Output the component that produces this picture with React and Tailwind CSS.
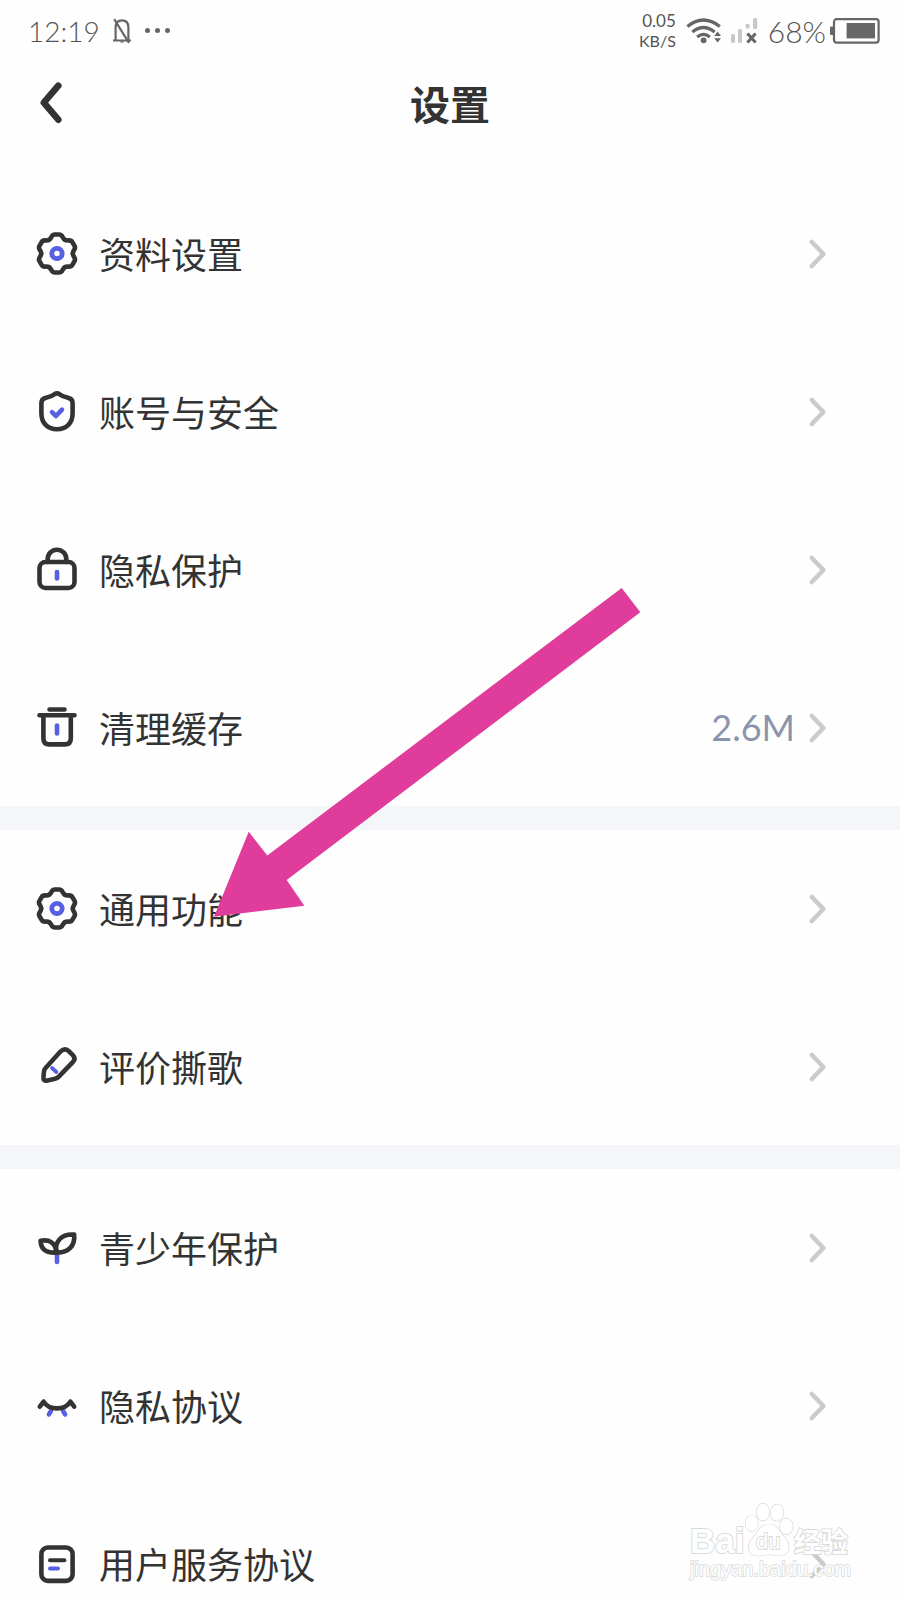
import React from "react";

const INK = "#333333";
const BLUE = "#575fe3";

function Icon({ children }) {
  return (
    <svg
      viewBox="0 0 48 48"
      className="size-12 shrink-0"
      fill="none"
      stroke={INK}
      strokeWidth="4.6"
      strokeLinecap="round"
      strokeLinejoin="round"
      aria-hidden="true"
    >
      {children}
    </svg>
  );
}

function GearIcon() {
  return (
    <Icon>
      {[0, 60, 120, 180, 240, 300].map((angle) => (
        <path
          key={angle}
          transform={`translate(24 23.5) rotate(${angle})`}
          d="M-7.9-13.7C-4.9-15.4-6-19-2.2-19L2.2-19C6-19 4.9-15.4 7.9-13.7"
        />
      ))}
      <circle cx="24" cy="23.5" r="5.2" stroke={BLUE} strokeWidth="4.8" />
    </Icon>
  );
}

function ShieldIcon() {
  return (
    <Icon>
      <path d="M21.5 6.2Q24 4.4 26.5 6.2Q29.5 8.6 35 9.8Q39.6 10.8 39.6 15V25.5C39.6 35.5 33 41.2 24 41.2S8.4 35.5 8.4 25.5V15Q8.4 10.8 13 9.8Q18.5 8.6 21.5 6.2Z" />
      <path d="M19 24.2L23 28L29 21.6" stroke={BLUE} />
    </Icon>
  );
}

function LockIcon() {
  return (
    <Icon>
      <rect x="6.5" y="16" width="35" height="26" rx="6" />
      <path d="M14.7 16V13a9.3 9.3 0 0 1 18.6 0V16" />
      <path d="M24 26V32.5" stroke={BLUE} />
    </Icon>
  );
}

function TrashIcon() {
  return (
    <Icon>
      <path d="M16.5 5.5H31.5M6.5 11.2H41.5" />
      <path d="M10.4 11.2V34.5Q10.4 40.4 16.4 40.4H31.8Q37.8 40.4 37.8 34.5V11.2" />
      <path d="M24 21.5V29.5" stroke={BLUE} />
    </Icon>
  );
}

function PencilIcon() {
  return (
    <Icon>
      <path d="M10.4 34.5L11 28.5Q11.2 26.5 12.6 25L27 9Q31.2 4.2 35.6 8L39.6 11.8Q43.2 15.6 39.8 19.2L25.8 33.6Q24.2 35.2 22 35.8L14.5 37.4Q9.9 38.4 10.4 34.5Z" />
      <path d="M19 25L23.4 29" stroke={BLUE} strokeWidth="3.8" />
    </Icon>
  );
}

function SproutIcon() {
  return (
    <Icon>
      <path d="M24 31V38" stroke={BLUE} />
      <path d="M23.5 28.6C13 29.2 8 25.5 7.6 16.8C16.5 15.2 22.5 18.5 23.5 28.6Z" />
      <path d="M23.8 28.6C20.8 18 28.5 9.6 41.2 10.6C42.2 22 35.5 28.8 23.8 28.6Z" />
    </Icon>
  );
}

function LashesIcon() {
  return (
    <Icon>
      <path d="M18 28.8L15.9 32.4M30 28.8L32.1 32.4" stroke={BLUE} />
      <path d="M10.6 19.6C16 28.6 32 28.6 37.4 19.6M6.8 24.6L10.6 19.6M41.2 24.6L37.4 19.6" />
    </Icon>
  );
}

function DocumentIcon() {
  return (
    <Icon>
      <rect x="8.4" y="7.5" width="31.2" height="33.4" rx="6.5" />
      <path d="M17 20.2H31.4" strokeWidth="4" />
      <path d="M17 28.5H25" stroke={BLUE} strokeWidth="4" />
    </Icon>
  );
}

const SECTIONS = [
  [
    { label: "资料设置", icon: GearIcon },
    { label: "账号与安全", icon: ShieldIcon },
    { label: "隐私保护", icon: LockIcon },
    { label: "清理缓存", icon: TrashIcon, value: "2.6M" },
  ],
  [
    { label: "通用功能", icon: GearIcon },
    { label: "评价撕歌", icon: PencilIcon },
  ],
  [
    { label: "青少年保护", icon: SproutIcon },
    { label: "隐私协议", icon: LashesIcon },
    { label: "用户服务协议", icon: DocumentIcon },
  ],
];

function StatusBar() {
  return (
    <div className="flex h-[62px] items-center justify-between pr-5 pl-7 font-['Lato','Noto_Sans',sans-serif] text-[28px] leading-8 text-[#555]">
      <div className="flex items-center">
        <span className="font-light">12:19</span>
        <svg viewBox="0 0 20 26" className="ml-3 h-[26px] w-5" fill="none" stroke="#666" strokeWidth="2.2" aria-hidden="true">
          <path d="M1 22.5H19M3.6 22V9.5Q3.6 2.4 10 2.4T16.4 9.5V22" />
          <path d="M2.2 1.2L17 25" />
          <path d="M7.6 23.4a2.6 2 0 0 0 4.8 0z" fill="#666" stroke="none" />
        </svg>
        <svg viewBox="0 0 28 6" className="ml-3 h-1.5 w-7" fill="#666" aria-hidden="true">
          <circle cx="3.5" cy="2.6" r="2.5" />
          <circle cx="13.5" cy="2.6" r="2.5" />
          <circle cx="23.5" cy="2.6" r="2.5" />
        </svg>
      </div>
      <div className="flex items-center">
        <div className="text-right leading-5">
          <div className="text-[17px]">0.05</div>
          <div className="text-[16px]">KB/S</div>
        </div>
        <svg viewBox="0 0 36 26" className="ml-2.5 h-[26px] w-9" fill="none" stroke="#666" strokeWidth="3.2" aria-hidden="true">
          <path d="M1.4 8.4Q17.5-4.4 33.8 8.4" />
          <path d="M6.4 14Q17.5 5 28.6 14" />
          <path d="M11.2 19Q17.5 13.6 23.8 19" />
          <circle cx="17.6" cy="22.3" r="2.9" fill="#666" stroke="none" />
          <path d="M31.6 13.6L35 18H28.2ZM31.6 24.6L35 20.2H28.2Z" fill="#666" stroke="none" />
        </svg>
        <svg viewBox="0 0 28 26" className="ml-2 h-[26px] w-7" aria-hidden="true">
          <g fill="#c8c8c8">
            <rect x="1" y="16" width="4" height="9" rx="1.5" />
            <rect x="8" y="11" width="4" height="14" rx="1.5" />
            <rect x="15.6" y="6" width="4" height="4.4" rx="1" />
            <rect x="23" y="0" width="4.2" height="11" rx="1.5" />
          </g>
          <path d="M17.4 15.6L25.6 24.6M25.6 15.6L17.4 24.6" stroke="#666" strokeWidth="3" />
        </svg>
        <span className="ml-2.5 text-[30px] font-light">68%</span>
        <svg viewBox="0 0 50 26" className="ml-1 h-[26px] w-[50px]" aria-hidden="true">
          <rect x="4" y="1.2" width="44.6" height="23.4" rx="2.5" fill="none" stroke="#666" strokeWidth="2.2" />
          <rect x="0" y="8.6" width="4" height="8.4" rx="1" fill="#666" />
          <rect x="16.6" y="5" width="28.4" height="15.4" fill="#666" />
        </svg>
      </div>
    </div>
  );
}

function Row({ label, icon: Glyph, value }) {
  return (
    <li>
      <a href="#" className="flex h-[157px] items-center pr-[69px] pl-[33px]">
        <Glyph />
        <span className="ml-[18px] grow pb-0.5 text-[36px] leading-[48px] text-[#333]">{label}</span>
        {value && (
          <span className="mr-3 pb-0.5 font-['Lato','Noto_Sans',sans-serif] text-[36px] leading-[48px] text-[#8a95ad]">{value}</span>
        )}
        <svg viewBox="0 0 24 32" className="h-8 w-6 shrink-0" fill="none" stroke="#cbcbcb" strokeWidth="4.6" strokeLinecap="round" strokeLinejoin="round" aria-hidden="true">
          <path d="M4.8 4L16.4 16L4.8 28" />
        </svg>
      </a>
    </li>
  );
}

function PointerArrow() {
  return (
    <svg viewBox="0 0 430 334" className="pointer-events-none absolute top-[586px] left-[212px] h-[334px] w-[430px]" aria-hidden="true">
      <path d="M2 330.7L36.7 245.7L55.3 269.5L409.7 2L428.3 26.3L74.7 294L92.3 319.7Z" fill="#df3c9b" />
    </svg>
  );
}

function Watermark() {
  return (
    <svg
      viewBox="0 0 170 84"
      className="pointer-events-none absolute top-[1500px] right-[42px] h-[84px] w-[170px] font-['Liberation_Sans','Noto_Sans_CJK_SC',sans-serif] [paint-order:stroke]"
      fill="#fff"
      stroke="#d9d9d9"
      strokeWidth="1.8"
    >
      <text x="2" y="53" className="text-[35px] font-bold">Bai</text>
      <g strokeWidth="1.3">
        <ellipse cx="63.7" cy="23.3" rx="6.3" ry="8" />
        <ellipse cx="74.9" cy="12" rx="6.2" ry="8.6" />
        <ellipse cx="89" cy="12.7" rx="6.5" ry="8.2" transform="rotate(8 89 12.7)" />
        <ellipse cx="98.3" cy="26.5" rx="6.6" ry="7.8" />
        <path d="M80.7 24.3C90 24.3 91 32 96.5 37.5C103 44.5 102.5 55.5 91.5 55.7C86 55.6 84 54.4 80.7 54.4S75 55.8 70 55.7C59 55.5 58.5 45 65 37.8C71 32 71.5 24.3 80.7 24.3Z" />
      </g>
      <text x="68" y="49" className="text-[22px]">du</text>
      <text x="106" y="52" className="text-[27px] font-bold">经验</text>
      <text x="2" y="76" className="text-[20px]" strokeWidth="1.5">jingyan.baidu.com</text>
    </svg>
  );
}

export default function App() {
  return (
    <div className="relative h-screen overflow-hidden bg-[#fefefe] font-['Noto_Sans_CJK_SC',sans-serif]">
      <StatusBar />
      <header className="mb-[29px] grid h-[84px] grid-cols-[1fr_auto_1fr] items-center px-8">
        <button type="button" aria-label="返回" className="h-12 w-10">
          <svg viewBox="0 0 40 48" className="h-12 w-10" fill="none" stroke={INK} strokeWidth="6.6" strokeLinecap="round" strokeLinejoin="round">
            <path d="M26.3 5.7L11.8 22.7L26.3 39.7" />
          </svg>
        </button>
        <h1 className="pb-0.5 text-[40px] leading-[48px] font-bold text-[#333]">设置</h1>
      </header>
      <main className="flex flex-col gap-6 bg-[#f4f6fa]">
        {SECTIONS.map((rows) => (
          <ul key={rows[0].label} className="flex flex-col gap-px bg-[#fefefe]">
            {rows.map((row) => (
              <Row key={row.label} {...row} />
            ))}
          </ul>
        ))}
      </main>
      <PointerArrow />
      <Watermark />
    </div>
  );
}
